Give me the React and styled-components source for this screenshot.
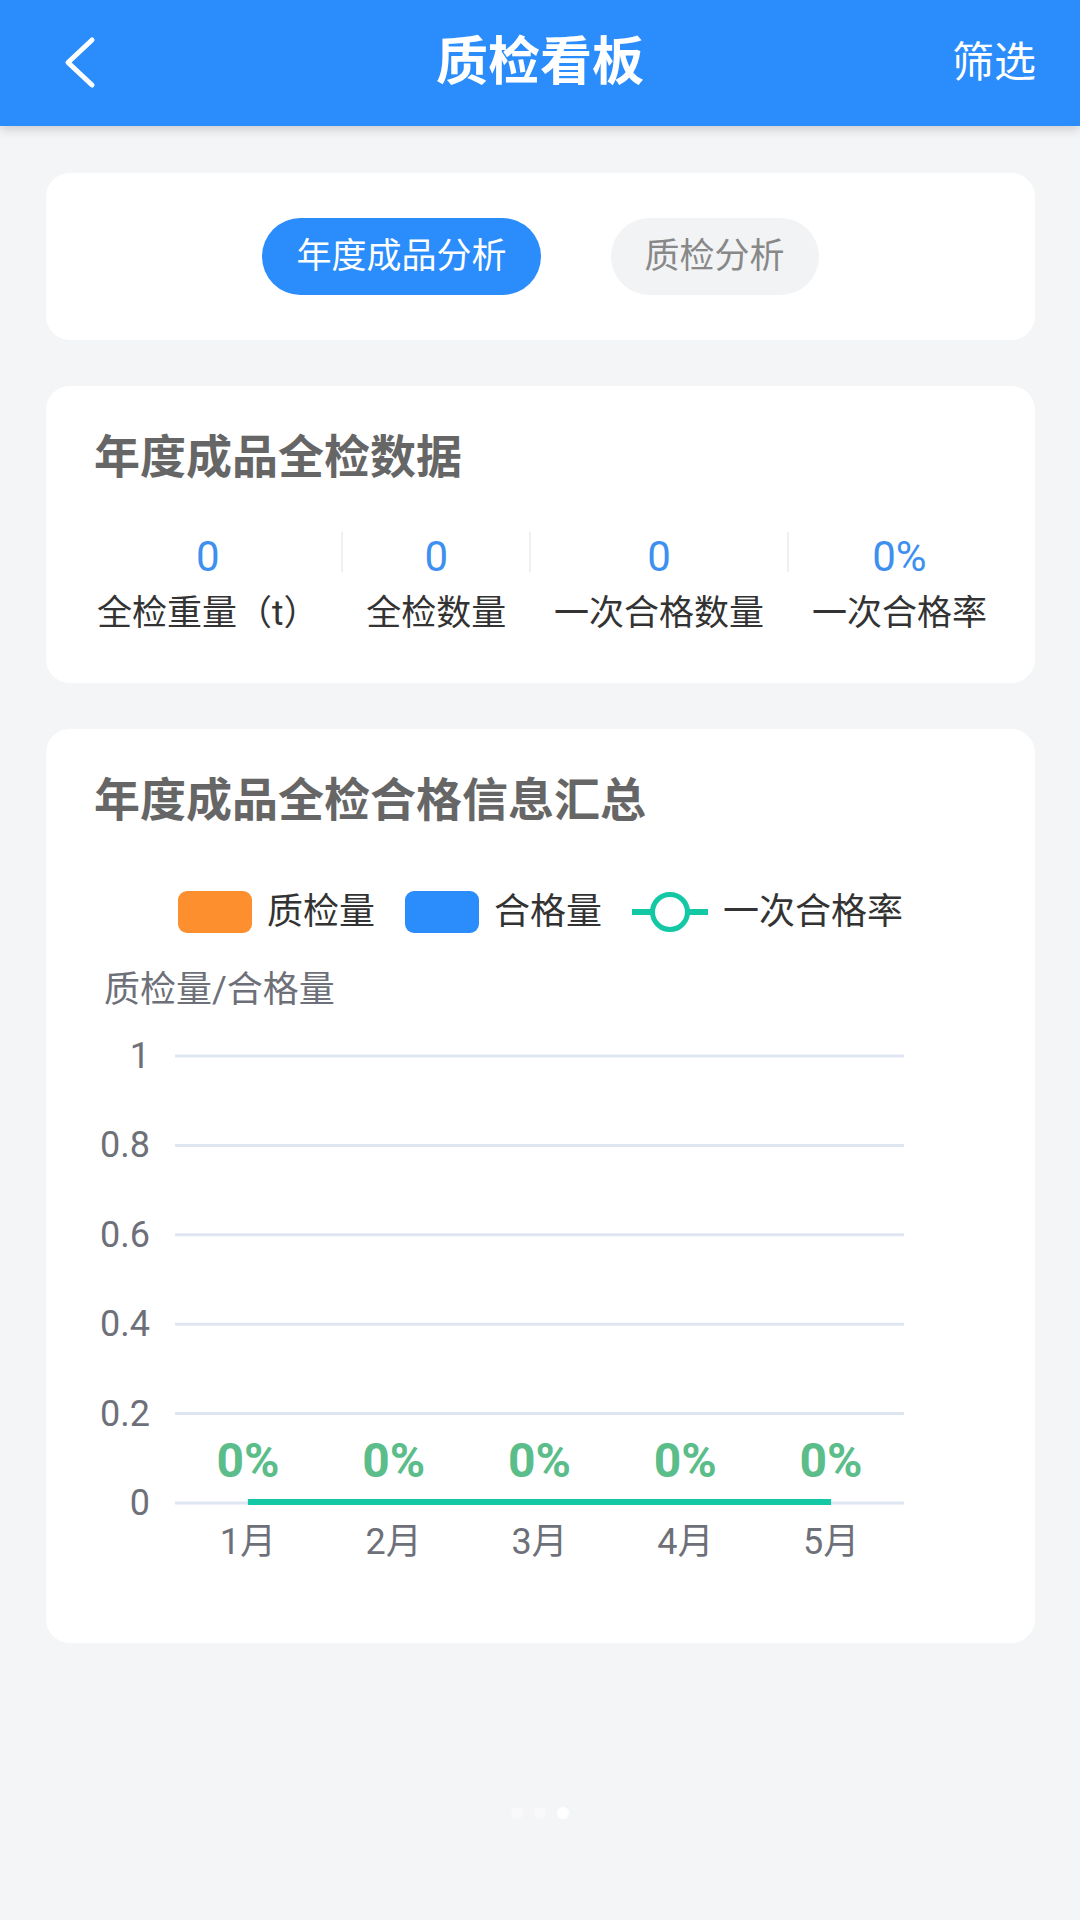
import React from 'react';
import styled, { createGlobalStyle } from 'styled-components';

const GlobalStyle = createGlobalStyle`
  html, body {
    margin: 0;
    padding: 0;
    background-color: #f4f5f7;
    font-family: Roboto, "Noto Sans CJK SC", sans-serif;
  }
  #root {
    min-height: 1920px;
  }
`;

const Page = styled.div`
  display: flex;
  flex-direction: column;
  min-height: 1920px;
  background-color: #f4f5f7;
`;

const Header = styled.header`
  position: relative;
  z-index: 2;
  display: grid;
  grid-template-columns: 1fr auto 1fr;
  align-items: center;
  height: 126px;
  padding: 0 44px;
  background-color: #2b8cfb;
  box-shadow: 0 3px 10px rgba(0, 0, 0, 0.18);
  color: #ffffff;
`;

const BackButton = styled.div`
  display: flex;
  align-items: center;
  justify-self: start;
  margin-left: 18px;
  cursor: pointer;
`;

const Title = styled.h1`
  margin: 0;
  font-size: 52px;
  font-weight: 700;
  line-height: 1;
`;

const Filter = styled.span`
  justify-self: end;
  font-size: 42px;
  line-height: 1;
`;

const Content = styled.main`
  display: flex;
  flex-direction: column;
  gap: 46px;
  padding: 47px 45px 0 46px;
`;

const Card = styled.section`
  background-color: #ffffff;
  border-radius: 24px;
  padding: ${(p) => p.$padding || '48px'};
`;

const TabGroup = styled.div`
  display: flex;
  justify-content: center;
  gap: 70px;
`;

const Tab = styled.button`
  height: 77px;
  padding: 0 34px;
  border: none;
  border-radius: 39px;
  font-family: inherit;
  font-size: 35px;
  line-height: 1;
  background-color: ${(p) => (p.$active ? '#2b8cfb' : '#f2f3f5')};
  color: ${(p) => (p.$active ? '#ffffff' : '#888888')};
  cursor: pointer;
`;

const CardTitle = styled.h2`
  margin: 0;
  font-size: 46px;
  line-height: 46px;
  font-weight: 700;
  color: #666666;
`;

const StatRow = styled.div`
  display: flex;
  justify-content: space-between;
  align-items: flex-start;
  margin-top: 52px;
  padding-left: 3px;
`;

const Stat = styled.div`
  display: flex;
  flex-direction: column;
  align-items: center;
`;

const StatValue = styled.span`
  font-size: 42px;
  line-height: 50px;
  color: #3d8ff0;
`;

const StatLabel = styled.span`
  margin-top: 10px;
  font-size: 35px;
  line-height: 44px;
  color: #333333;
  white-space: nowrap;
`;

const Divider = styled.div`
  width: 2px;
  height: 40px;
  background-color: #f0f0f0;
`;

const Legend = styled.div`
  display: flex;
  justify-content: center;
  align-items: center;
  gap: 30px;
  margin-top: 68px;
`;

const LegendItem = styled.div`
  display: flex;
  align-items: center;
  gap: 15px;
`;

const Swatch = styled.span`
  width: 74px;
  height: 42px;
  border-radius: 9px;
  background-color: ${(p) => p.$color};
`;

const LegendText = styled.span`
  font-size: 36px;
  line-height: 42px;
  color: #333333;
`;

const ChartSvg = styled.svg`
  display: block;
  margin-top: 17px;
  font-family: Roboto, "Noto Sans CJK SC", sans-serif;
`;

const Dots = styled.div`
  display: flex;
  justify-content: center;
  gap: 11px;
  margin-top: 164px;
`;

const Dot = styled.span`
  width: 12px;
  height: 12px;
  border-radius: 50%;
  background-color: ${(p) => (p.$active ? '#ffffff' : '#f9f9fb')};
`;

const stats = [
  { value: '0', label: '全检重量（t）' },
  { value: '0', label: '全检数量' },
  { value: '0', label: '一次合格数量' },
  { value: '0%', label: '一次合格率' },
];

const months = ['1月', '2月', '3月', '4月', '5月'];
const yTicks = ['1', '0.8', '0.6', '0.4', '0.2', '0'];

const GRID_LEFT = 81;
const GRID_RIGHT = 810;
const GRID_TOP = 106;
const GRID_BOTTOM = 553;

const Chart = () => {
  const step = (GRID_BOTTOM - GRID_TOP) / (yTicks.length - 1);
  const band = (GRID_RIGHT - GRID_LEFT) / months.length;
  const xs = months.map((_, i) => GRID_LEFT + band * (i + 0.5));
  return (
    <ChartSvg width="892" height="650" viewBox="0 0 892 650">
      <text x="10" y="40" fontSize="36" fill="#6e7079" dominantBaseline="central">
        质检量/合格量
      </text>
      {yTicks.map((t, i) => {
        const y = GRID_TOP + step * i;
        return (
          <g key={t}>
            <line x1={GRID_LEFT} x2={GRID_RIGHT} y1={y} y2={y} stroke="#e0e6f1" strokeWidth="3" />
            <text x="56" y={y} fontSize="36" fill="#6e7079" textAnchor="end" dominantBaseline="central">
              {t}
            </text>
          </g>
        );
      })}
      <line
        x1={xs[0]}
        x2={xs[xs.length - 1]}
        y1={GRID_BOTTOM - 1}
        y2={GRID_BOTTOM - 1}
        stroke="#14c7a5"
        strokeWidth="6"
      />
      {xs.map((x, i) => (
        <g key={months[i]}>
          <text x={x} y="510" fontSize="48" fontWeight="700" fill="#5bbd8a" textAnchor="middle" dominantBaseline="central">
            0%
          </text>
          <text x={x} y="592" fontSize="36" fill="#6e7079" textAnchor="middle" dominantBaseline="central">
            {months[i]}
          </text>
        </g>
      ))}
    </ChartSvg>
  );
};

const App = () => {
  return (
    <Page>
      <GlobalStyle />
      <Header>
        <BackButton>
          <svg width="40" height="56" viewBox="0 0 40 56">
            <polyline
              points="30,5 6,27.5 30,50"
              fill="none"
              stroke="#ffffff"
              strokeWidth="5"
              strokeLinecap="round"
              strokeLinejoin="round"
            />
          </svg>
        </BackButton>
        <Title>质检看板</Title>
        <Filter>筛选</Filter>
      </Header>

      <Content>
        <Card $padding="45px 48px">
          <TabGroup>
            <Tab $active>年度成品分析</Tab>
            <Tab>质检分析</Tab>
          </TabGroup>
        </Card>

        <Card $padding="48px 48px 47px">
          <CardTitle>年度成品全检数据</CardTitle>
          <StatRow>
            {stats.map((s, i) => (
              <React.Fragment key={s.label}>
                {i > 0 && <Divider />}
                <Stat>
                  <StatValue>{s.value}</StatValue>
                  <StatLabel>{s.label}</StatLabel>
                </Stat>
              </React.Fragment>
            ))}
          </StatRow>
        </Card>

        <Card $padding="48px 48px 43px">
          <CardTitle>年度成品全检合格信息汇总</CardTitle>
          <Legend>
            <LegendItem>
              <Swatch $color="#fd8f2f" />
              <LegendText>质检量</LegendText>
            </LegendItem>
            <LegendItem>
              <Swatch $color="#2b8cfb" />
              <LegendText>合格量</LegendText>
            </LegendItem>
            <LegendItem>
              <svg width="76" height="42" viewBox="0 0 76 42">
                <line x1="0" x2="76" y1="21" y2="21" stroke="#14c7a5" strokeWidth="6" />
                <circle cx="38" cy="21" r="17.5" fill="#ffffff" stroke="#14c7a5" strokeWidth="5" />
              </svg>
              <LegendText>一次合格率</LegendText>
            </LegendItem>
          </Legend>
          <Chart />
        </Card>
      </Content>

      <Dots>
        <Dot />
        <Dot />
        <Dot $active />
      </Dots>
    </Page>
  );
};

export default App;
